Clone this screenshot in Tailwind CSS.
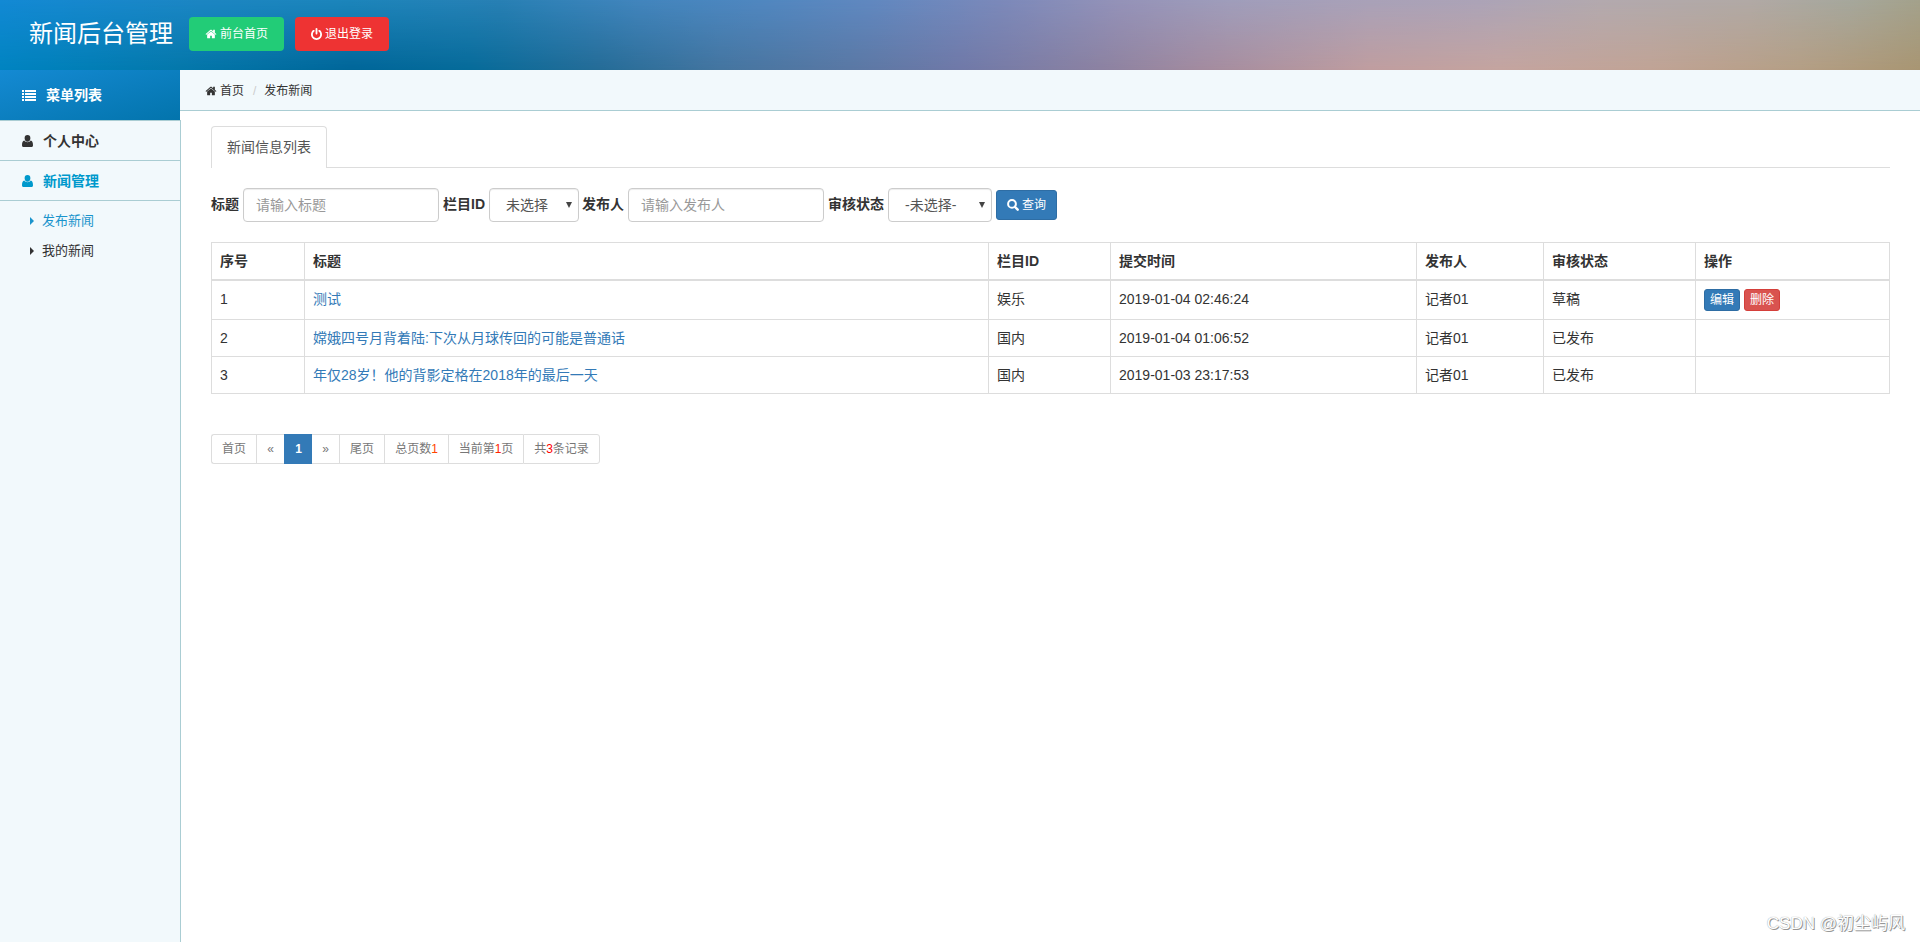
<!DOCTYPE html>
<html lang="zh-CN">

<head>
  <meta charset="UTF-8">
  <meta name="viewport" content="width=device-width, initial-scale=1.0">
  <title>新闻后台管理</title>
  <script src="https://cdn.jsdelivr.net/npm/@tailwindcss/browser@4"></script>
</head>

<body class="h-screen overflow-hidden bg-white font-['Liberation_Sans','Noto_Sans_CJK_SC',sans-serif] text-sm leading-5 text-[#333]">
  <!-- icons -->
  <svg class="hidden">
    <symbol id="home" viewBox="0 0 1792 1792"><path d="M1472 992v480q0 26-19 45t-45 19h-384v-384h-256v384h-384q-26 0-45-19t-19-45v-480q0-1 .5-3t.5-3l575-474 575 474q1 2 1 6zm223-69l-62 74q-8 9-21 11h-3q-13 0-21-7l-692-577-692 577q-12 8-24 7-13-2-21-11l-62-74q-8-10-7-23.5t11-21.5l719-599q32-26 76-26t76 26l244 204v-195q0-14 9-23t23-9h192q14 0 23 9t9 23v408l219 182q10 8 11 21.5t-7 23.5z"/></symbol>
    <symbol id="power" viewBox="128 0 1536 1664"><path d="M1664 896q0 156-61 298t-164 245-245 164-298 61-298-61-245-164-164-245-61-298q0-182 80.5-343t226.5-270q43-32 95.5-25t83.5 50q32 42 24.5 94.500t-49.500 84.500q-98 74-151.500 181t-53.500 228q0 104 40.500 198.500t109.500 163.500 163.500 109.500 198.500 40.500 198.500-40.500 163.500-109.500 109.500-163.500 40.500-198.500q0-121-53.500-228t-151.500-181q-42-32-49.500-84.500t24.500-94.500q31-43 84-50t95 25q146 109 226.500 270t80.500 343zm-640-768v640q0 52-38 90t-90 38-90-38-38-90v-640q0-52 38-90t90-38 90 38 38 90z"/></symbol>
    <symbol id="user" viewBox="0 0 11 12"><path d="M5.500 0a2.900 3.200 0 0 1 2.900 3.200c0 1.900-1.200 3.500-2.900 3.500S2.600 5.100 2.600 3.200A2.900 3.200 0 0 1 5.500 0zM2.300 5.600c.8 1.100 1.900 1.700 3.200 1.700s2.400-.6 3.200-1.700C10.400 6 11 7.700 11 10.200c0 1-.6 1.800-1.500 1.800h-8C.6 12 0 11.200 0 10.200 0 7.700.6 6 2.300 5.600z"/></symbol>
    <symbol id="list" viewBox="0 0 14 11"><path d="M0 0h2v2H0zM3 0h11v2H3zM0 3h2v2H0zM3 3h11v2H3zM0 6h2v2H0zM3 6h11v2H3zM0 9h2v2H0zM3 9h11v2H3z"/></symbol>
    <symbol id="caret" viewBox="0 0 4 8"><path d="M0 0l4 4-4 4z"/></symbol>
    <symbol id="search" viewBox="0 0 12 12"><path fill="none" stroke="currentColor" stroke-width="2" d="M5 1a3.900 3.900 0 1 1 0 7.800A3.900 3.900 0 0 1 5 1z"/><path stroke="currentColor" stroke-width="2.400" stroke-linecap="round" d="M8 8l2.700 2.700"/></symbol>
  </svg>

  <header class="relative h-[70px] bg-[linear-gradient(to_right,#0084c1_0px,#0478ab_180px,#006699_350px,#066b9a_470px,#256c97_600px,#4475a0_720px,#5a78a4_850px,#7079a8_960px,#8c82a2_1100px,#a38b9f_1200px,#c09ea0_1370px,#c5a5a0_1500px,#c1a496_1650px,#b59f85_1800px,#a99673_1920px)]">
    <div class="absolute inset-0 bg-[linear-gradient(to_right,#1289d4_0px,#1c86c3_200px,#1c85bb_350px,#2880b4_500px,#4285bd_640px,#5087c0_760px,#6088c0_870px,#7b89ba_1000px,#9492b8_1120px,#9f9dbb_1230px,#a8a1b8_1370px,#aba3b7_1480px,#b2a9ae_1600px,#b0a9a5_1750px,#a5a79c_1850px,#a3a18b_1920px)] mask-b-from-0% mask-b-to-100%"></div>
    <div class="relative flex h-[68px] items-center pl-[29px] text-white">
      <h1 class="w-[160px] whitespace-nowrap text-2xl">新闻后台管理</h1>
      <a href="#" class="flex h-[34px] w-[95px] items-center justify-center gap-[3px] rounded bg-[#22cc77] text-xs"><svg class="size-3 fill-current"><use href="#home"/></svg>前台首页</a>
      <a href="#" class="ml-[11px] flex h-[34px] w-[94px] items-center justify-center gap-[3px] rounded bg-[#ee3333] text-xs"><svg class="h-3 w-[11px] fill-current"><use href="#power"/></svg>退出登录</a>
    </div>
  </header>

  <div class="flex h-[872px]">
    <aside class="flex w-[180px] flex-col bg-[#f2f9fc]">
      <div class="flex h-[50px] shrink-0 items-center bg-linear-to-br from-[#148ad3] to-[#0374ac] pl-[22px] font-bold text-white">
        <svg class="mr-[10px] h-[11px] w-[14px] fill-current"><use href="#list"/></svg>菜单列表
      </div>
      <div class="-mr-px flex-1 border-r border-[#aacdd3]">
        <a href="#" class="flex h-[41px] items-center border-y border-[#aacdd3] pl-[22px] font-bold"><svg class="mr-[10px] h-3 w-[11px] fill-current"><use href="#user"/></svg>个人中心</a>
        <a href="#" class="flex h-10 items-center border-b border-[#aacdd3] pl-[22px] font-bold text-[#0099cc]"><svg class="mr-[10px] h-3 w-[11px] fill-current"><use href="#user"/></svg>新闻管理</a>
        <ul class="pt-[5px] text-[13px]">
          <li class="flex h-[30px] items-center pl-[30px] text-[#1a94cc]"><svg class="mr-2 h-2 w-1 fill-current"><use href="#caret"/></svg>发布新闻</li>
          <li class="flex h-[30px] items-center pl-[30px]"><svg class="mr-2 h-2 w-1 fill-current"><use href="#caret"/></svg>我的新闻</li>
        </ul>
      </div>
    </aside>

    <main class="flex-1">
      <nav class="flex h-[41px] items-center border-b border-[#aacdd3] bg-[#f2f9fc] pt-px pl-[25px] text-xs">
        <svg class="mr-[3px] size-3 fill-current"><use href="#home"/></svg>首页<span class="mr-2 ml-[9px] text-[#ccc]">/</span>发布新闻
      </nav>

      <section class="ml-px pt-[15px] pr-[30px] pl-[30px]">
        <div class="flex border-b border-[#ddd]">
          <div class="-mb-px flex h-[42px] w-[116px] items-center justify-center rounded-t border border-b-0 border-[#ddd] bg-white pb-0.5 text-[#555]">新闻信息列表</div>
        </div>

        <form class="mt-5 flex h-[34px] items-center whitespace-nowrap">
          <label class="w-8 pb-0.5 font-bold">标题</label>
          <input type="text" placeholder="请输入标题" class="h-[34px] w-[196px] rounded border border-[#ccc] px-3 shadow-[inset_0_1px_1px_rgba(0,0,0,0.075)] placeholder:text-[#999]">
          <label class="ml-1 w-[46px] pb-0.5 font-bold">栏目ID</label>
          <div class="flex h-[34px] w-[90px] items-center justify-between rounded border border-[#ccc] pr-[6px] pl-4 text-[#555] shadow-[inset_0_1px_1px_rgba(0,0,0,0.075)]">未选择<svg class="h-1.5 w-1.5 fill-[#444]" viewBox="0 0 6 6"><path d="M0 0h6L3 6z"/></svg></div>
          <label class="ml-[3px] w-[46px] pb-0.5 font-bold">发布人</label>
          <input type="text" placeholder="请输入发布人" class="h-[34px] w-[196px] rounded border border-[#ccc] px-3 shadow-[inset_0_1px_1px_rgba(0,0,0,0.075)] placeholder:text-[#999]">
          <label class="ml-1 w-[60px] pb-0.5 font-bold">审核状态</label>
          <div class="flex h-[34px] w-[104px] items-center justify-between rounded border border-[#ccc] pr-[6px] pl-4 text-[#555] shadow-[inset_0_1px_1px_rgba(0,0,0,0.075)]">-未选择-<svg class="h-1.5 w-1.5 fill-[#444]" viewBox="0 0 6 6"><path d="M0 0h6L3 6z"/></svg></div>
          <button type="button" class="ml-1 flex h-[30px] w-[61px] items-center justify-center gap-[3px] rounded-[3px] border border-[#2e6da4] bg-[#337ab7] text-xs text-white"><svg class="size-3 fill-current"><use href="#search"/></svg>查询</button>
        </form>

        <table class="mt-5 w-[1679px] table-fixed border-collapse border border-[#ddd] text-left [&_td]:border [&_td]:border-[#ddd] [&_td]:px-2 [&_td]:py-0 [&_th]:border [&_th]:border-b-2 [&_th]:border-[#ddd] [&_th]:px-2 [&_th]:py-0">
          <colgroup>
            <col class="w-[93px]">
            <col class="w-[684px]">
            <col class="w-[122px]">
            <col class="w-[306px]">
            <col class="w-[127px]">
            <col class="w-[152px]">
            <col class="w-[194px]">
          </colgroup>
          <thead>
            <tr class="h-[37px]"><th>序号</th><th>标题</th><th>栏目ID</th><th>提交时间</th><th>发布人</th><th>审核状态</th><th>操作</th></tr>
          </thead>
          <tbody>
            <tr class="h-10 [&>td]:pb-0.5">
              <td>1</td>
              <td class="text-[#337ab7]">测试</td>
              <td>娱乐</td>
              <td>2019-01-04 02:46:24</td>
              <td>记者01</td>
              <td>草稿</td>
              <td class="pb-0!">
                <div class="flex gap-1 text-xs text-white">
                  <button class="h-[22px] w-9 rounded-[3px] border border-[#2e6da4] bg-[#337ab7] leading-5">编辑</button>
                  <button class="h-[22px] w-9 rounded-[3px] border border-[#d43f3a] bg-[#d9534f] leading-5">删除</button>
                </div>
              </td>
            </tr>
            <tr class="h-[37px]">
              <td>2</td>
              <td class="text-[#337ab7]">嫦娥四号月背着陆:下次从月球传回的可能是普通话</td>
              <td>国内</td>
              <td>2019-01-04 01:06:52</td>
              <td>记者01</td>
              <td>已发布</td>
              <td></td>
            </tr>
            <tr class="h-[37px]">
              <td>3</td>
              <td class="text-[#337ab7]">年仅28岁！他的背影定格在2018年的最后一天</td>
              <td>国内</td>
              <td>2019-01-03 23:17:53</td>
              <td>记者01</td>
              <td>已发布</td>
              <td></td>
            </tr>
          </tbody>
        </table>

        <ul class="mt-10 flex h-[30px] w-[389px] text-xs text-[#777] [&>li]:flex [&>li]:items-center [&>li]:justify-center [&>li]:border-y [&>li]:border-l [&>li]:border-[#ddd]">
          <li class="w-[45px] rounded-l-[3px]">首页</li>
          <li class="w-7">«</li>
          <li class="w-7 border-[#337ab7]! bg-[#337ab7] font-bold text-white">1</li>
          <li class="w-[27px] border-l-0!">»</li>
          <li class="w-[45px]">尾页</li>
          <li class="w-16">总页数<span class="text-[#f40]">1</span></li>
          <li class="w-[75px]">当前第<span class="text-[#f20]">1</span>页</li>
          <li class="w-[77px] rounded-r-[3px] border-r">共<span class="text-[red]">3</span>条记录</li>
        </ul>
      </section>
    </main>
  </div>

  <div class="absolute right-[15px] bottom-[6px] text-[17px] leading-6 whitespace-nowrap text-white [text-shadow:0_0_1px_#888,1px_1px_0_#999]">CSDN @初尘屿风</div>
</body>

</html>
